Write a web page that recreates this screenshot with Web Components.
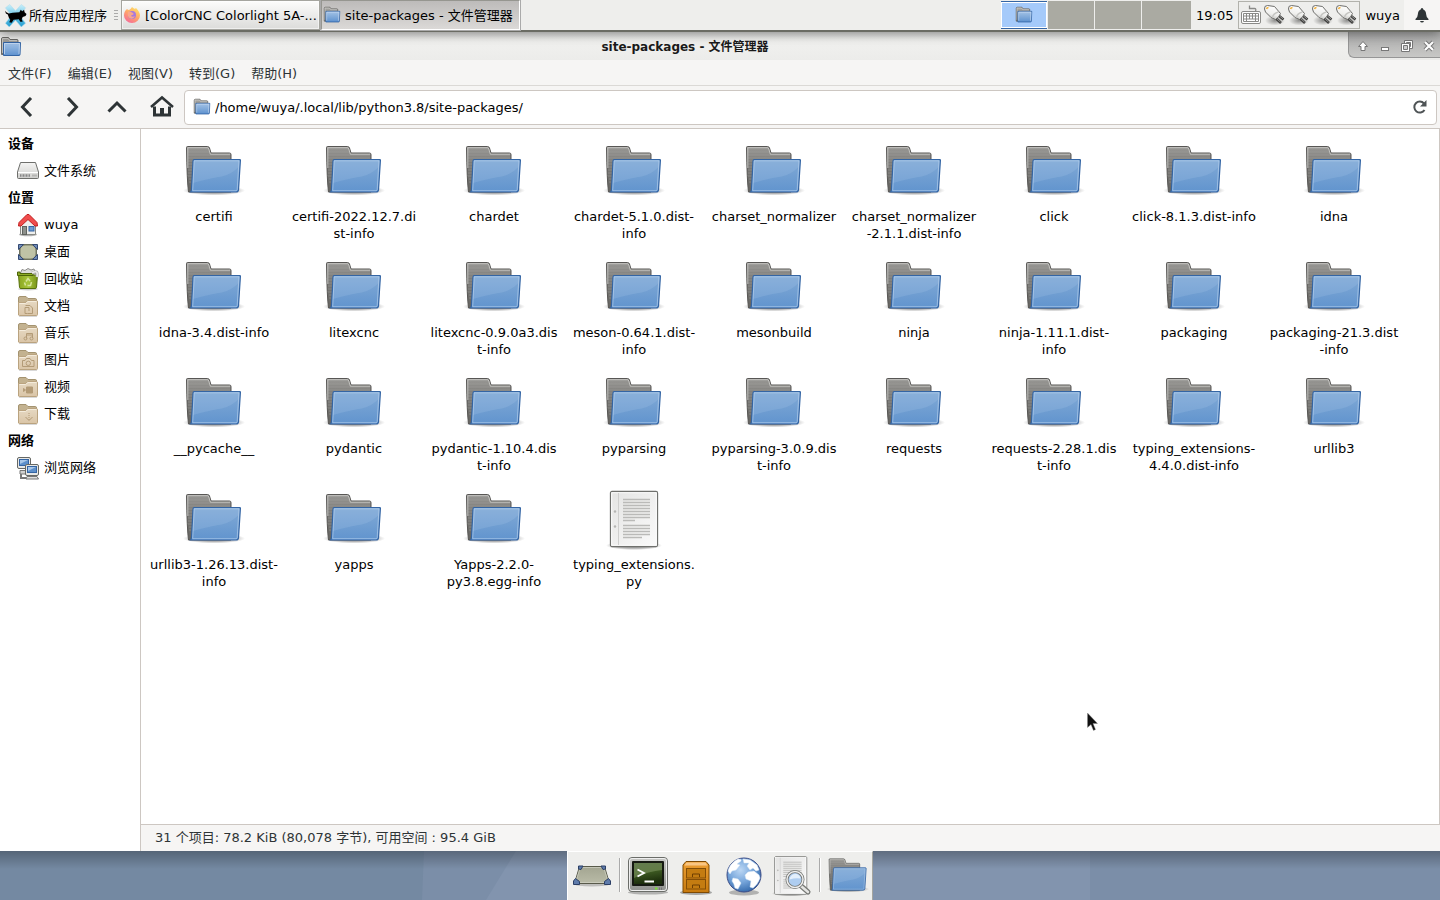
<!DOCTYPE html>
<html lang="zh-CN">
<head>
<meta charset="utf-8">
<title>site-packages - 文件管理器</title>
<style>
  html, body { margin: 0; height: 100%; }
  body { font: 13px/17px "DejaVu Sans", "Noto Sans CJK SC", sans-serif; color: #000; overflow: hidden; }
</style>
</head>
<body>
<xf-desktop>
  <xf-panel slot="panel"></xf-panel>
  <fm-window></fm-window>
  <xf-dock slot="dock"></xf-dock>
</xf-desktop>

<script>
const folderSmall = `<defs><linearGradient id="b" x2="0" y2="1"><stop stop-color="#aaa9a5"/><stop offset="1" stop-color="#73726f"/></linearGradient><linearGradient id="f" x2="0" y2="1"><stop stop-color="#a4c3e6"/><stop offset=".5" stop-color="#82abda"/><stop offset="1" stop-color="#5d91cf"/></linearGradient></defs>
  <path d="M1.5 18.5V3Q1.5 1.5 3 1.500H8.500L10 3.500H17Q18 3.500 18 4.500V18.500Z" fill="url(#b)" stroke="#6b6a67"/><path d="M2.500 17V2.500H8L9.500 4.500H17" fill="none" stroke="#d6d5d2" opacity=".7"/>
  <path d="M3.500 6.500H20.500L20 18.500Q20 19.500 19 19.500H3.500Z" fill="url(#f)" stroke="#3465a4"/><path d="M4.500 18V7.500H19.500L19 18" fill="none" stroke="#cfe0f4" opacity=".7"/>`;
const folderLarge = `<defs><linearGradient id="b" x2="0" y2="1"><stop stop-color="#9a9996"/><stop offset=".35" stop-color="#7c7b78"/><stop offset="1" stop-color="#656461"/></linearGradient><linearGradient id="f" x2="0" y2="1"><stop stop-color="#82aad6"/><stop offset="1" stop-color="#6194ce"/></linearGradient><radialGradient id="s"><stop stop-opacity=".5"/><stop offset=".6" stop-opacity=".3"/><stop offset="1" stop-opacity="0"/></radialGradient></defs>
  <ellipse cx="32" cy="52.500" rx="31" ry="5" fill="url(#s)"/>
  <path d="M6.500 54Q5 43 4.500 9.500Q4.500 8.500 5.500 8.500H25.500Q27 8.500 27.500 10L29 15H47.500Q49 15 49 16.500V54Z" fill="url(#b)" stroke="#585755"/>
  <path d="M6 14H27M6 17H48M6 20H48M6 23H11M6 26H11M6 29H11M6 32H10M6 35H10M6 38H10M7 41H10M7 44H9" stroke="#a6a5a2" opacity=".45"/>
  <path d="M5.800 30V9.700H25.500Q26.300 9.700 26.800 11L28.300 16.200H48" fill="none" stroke="#d0cfcc" opacity=".8"/>
  <path d="M12 21.500H57.500Q58.500 21.500 58.400 22.500L56.500 52Q56.300 54 54 54H8.500Q9.300 53 9.500 51L11 23Q11.200 21.500 12 21.500Z" fill="url(#f)" stroke="#3465a4" stroke-width="1.200"/>
  <path d="M12.200 23H57L56.500 29Q50 36 40 38.500Q28 40 11 45Z" fill="#a3c3e6" opacity=".25"/>
  <path d="M10.700 52.700L12.200 22.800H57L55.200 51.500Q55 52.700 54 52.700Z" fill="none" stroke="#c4daf2" opacity=".55"/>`;
const place = inner => `<defs><linearGradient id="f" x2="0" y2="1"><stop stop-color="#e6d9c3"/><stop offset="1" stop-color="#dac5a7"/></linearGradient></defs><g transform="translate(1 1)">
  <path d="M1.500 14V3Q1.500 1.500 3 1.500H9L11 3.500H18.500Q19.500 3.500 19.500 5V14Z" fill="#c3b290" stroke="#a49370"/>
  <path d="M1.500 20V7.500H8Q9 7.500 10 6.500Q10.500 5.500 12 5.500H19.500Q20.500 5.500 20.500 7V19.500Q20.500 20.500 19.500 20.500H2.500Q1.500 20.500 1.500 19.500Z" fill="url(#f)" stroke="#baa37f"/>
  <path d="M2.500 8.500H8.500L11 6.500H19.500" fill="none" stroke="#f4ecdc"/><path d="M2 21.500H20" stroke="#000" opacity=".15"/>
  <g fill="none" stroke="#b39b77">${inner}</g></g>`;
const doc = `<defs><linearGradient id="p" x2="1" y2="1"><stop stop-color="#e4e4e3"/><stop offset="1" stop-color="#fafafa"/></linearGradient><radialGradient id="s"><stop stop-opacity=".5"/><stop offset=".7" stop-opacity=".25"/><stop offset="1" stop-opacity="0"/></radialGradient></defs>
  <ellipse cx="32" cy="59.500" rx="28" ry="4.500" fill="url(#s)"/><rect x="8.500" y="5.500" width="47" height="55" rx="1.500" fill="url(#p)" stroke="#6f706d" stroke-width="1.300"/>
  <rect x="9.700" y="6.700" width="44.600" height="52.600" fill="none" stroke="#fff"/><path d="M16.500 7V59" stroke="#cfcfce"/><circle cx="13" cy="25.500" r="1.200" fill="#b5b5b3"/><circle cx="13" cy="40.500" r="1.200" fill="#b5b5b3"/>
  <path d="M21 13.500H48M21 16.500H48M21 19.500H48M21 22.500H48M21 25.500H48M21 28.500H48M21 31.500H48M21 34.500H33M21 39.500H48M21 42.500H48M21 45.500H48M21 48.500H48M21 51.500H40" stroke="#babab8" stroke-width="1.300"/>`;
const ICONS = {
  folder: [64, folderLarge],
  'folder-small': [22, folderSmall],
  doc: [64, doc],
  xfce: [24, `<defs><linearGradient id="x" x2="0" y2="1"><stop stop-color="#c8effb"/><stop offset=".5" stop-color="#6fc8e8"/><stop offset="1" stop-color="#1d9bd0"/></linearGradient></defs>
    <path d="M1.500 4L6 .500L12 7L18 .500L22.500 4L16.500 12L22.500 20L18 24L12 17L5.500 24L1.500 20L7.500 12Z" fill="url(#x)" stroke="#b4dcea" stroke-width=".6"/>
    <path d="M1 7L2.500 8.500L5 10L9 9L16 8.500L17.500 6L19 7.500L21 6L21.500 8.500L23.500 10.500L22.500 12.500L19.500 13.500L18.500 16L19.500 18.500L17 18.500L15.500 16L10 16.500L8 19.500L5.500 19L6.500 16.500L5 14L4 11L2 10Z"/>`],
  firefox: [18, `<defs><linearGradient id="x" x1=".8" x2=".2" y2="1"><stop stop-color="#ffe566"/><stop offset=".5" stop-color="#ffa46a"/><stop offset="1" stop-color="#f5679b"/></linearGradient></defs>
    <path d="M4 3Q5 4 6 4Q8 3 9 1Q10 2 12 3Q12.500 2 13 2Q17 6 17 9.500A8 7.500 0 0 1 1 9.500Q1 5 4 3Z" fill="url(#x)"/><circle cx="9" cy="9" r="4" fill="#a779dc"/><path d="M5 6Q7 5 9 6.500Q11 7 10.500 8.500Q8 9 8 10Q9.500 11.500 12 10Q10 14 6.500 12Q4 10 5 6Z" fill="#f9a78b"/>`],
  keyboard: [20, `<path d="M8.500 .500V3.500H13.500Q15.500 3.500 14.500 6" fill="none" stroke="#8a8a87" stroke-width="1.300"/><rect x=".5" y="6.500" width="19" height="12" rx="1.500" fill="#fff" stroke="#8a8a87"/>
    <path d="M2.500 8.500H17.500V16.500H2.500ZM2.500 11H17.500M2.500 14H17.500M5.500 8.500V16.500M8.500 8.500V14M11.500 8.500V14M14.500 8.500V16.500" fill="none" stroke="#8a8a87"/>`],
  plug: [22, `<defs><radialGradient id="s"><stop stop-opacity=".4"/><stop offset="1" stop-opacity="0"/></radialGradient><linearGradient id="g" x1=".6" x2=".3" y2="1"><stop stop-color="#fff"/><stop offset=".6" stop-color="#efefed"/><stop offset="1" stop-color="#b9b9b6"/></linearGradient></defs><ellipse cx="12" cy="16.500" rx="10" ry="5" fill="url(#s)"/>
    <path d="M12.500 14L18 19M15.500 11.500L20.500 15.500" stroke="#3f3f3d" stroke-width="2.600"/><path d="M13.500 14.500L17.500 18M16.500 12L20 14.800" stroke="#aaa" stroke-width=".8"/>
    <path d="M1.500 5Q1 1.500 4.500 1.500L11.500 2.500L17.500 9.500L15.500 13L12.500 15.500L8 13.500L2.500 8Z" fill="url(#g)" stroke="#6f6f6c"/><path d="M9.500 13.500Q10 9.500 15.500 8" fill="none" stroke="#c6c6c3" stroke-width="1.400"/><path d="M3.500 5Q4 3.500 5.500 3.500" fill="none" stroke="#f3b23a" stroke-width="1.600"/>`],
  bell: [16, `<path d="M8 1Q9.300 1 9.300 2.500Q12 3.500 12.200 7.500Q12.300 10.500 14.500 12V13H1.500V12Q3.700 10.500 3.800 7.500Q4 3.500 6.700 2.500Q6.700 1 8 1ZM6 14H10Q9.500 15.500 8 15.500Q6.500 15.500 6 14Z" fill="#2e3436"/>`],
  back: [20, `<path d="M14 1L5.500 10L14 19" fill="none" stroke="#2e3436" stroke-width="3"/>`],
  forward: [20, `<path d="M6 1L14.500 10L6 19" fill="none" stroke="#2e3436" stroke-width="3"/>`],
  up: [20, `<path d="M1.500 14.500L10 6L18.500 14.500" fill="none" stroke="#2e3436" stroke-width="3"/>`],
  home: [24, `<path d="M1 12L12 2.500L23 12" fill="none" stroke="#2e3436" stroke-width="2.500"/><path d="M4.500 11.500V20H19.500V11.500" fill="none" stroke="#2e3436" stroke-width="3"/><path d="M10 21V13H14V21Z" fill="#2e3436"/>`],
  reload: [16, `<path d="M12.500 11A5.500 5.500 0 1 1 12 4.500" fill="none" stroke="#4f5456" stroke-width="2"/><path d="M14.500 1V7.500H8Z" fill="#4f5456"/>`],
  shade: [12, `<path d="M6 1.500L10.500 6.500H8V10.500H4V6.500H1.500Z" fill="#fff" stroke="#777" stroke-width="1"/>`],
  min: [12, `<rect x="2.500" y="7.500" width="7" height="3" fill="#fff" stroke="#777"/>`],
  max: [12, `<path d="M3.500 .500H11.500V8.500H3.500Z" fill="#fff" stroke="#777"/><path d="M5.500 2.500H9.500V6.500H5.500Z" fill="#bbb" stroke="#777"/><path d="M.5 3.500H8.500V11.500H.5Z" fill="#fff" stroke="#777"/><path d="M2.500 5.500H6.500V9.500H2.500Z" fill="#ccc" stroke="#777"/>`],
  close: [12, `<path d="M2 2L10 10M10 2L2 10" stroke="#777" stroke-width="4"/><path d="M2 2L10 10M10 2L2 10" stroke="#fff" stroke-width="2.200"/>`],
  drive: [24, `<defs><linearGradient id="d" x2="0" y2="1"><stop stop-color="#f4f4f3"/><stop offset="1" stop-color="#cfcfcd"/></linearGradient></defs><path d="M4.500 3.500H19.500L22.500 13V18.500Q22.500 19.500 21.500 19.500H2.500Q1.500 19.500 1.500 18.500V13Z" fill="url(#d)" stroke="#6e6f6c"/><path d="M2 13.500H22" stroke="#fff"/><path d="M4 16.500H14" stroke="#888" stroke-width="2.500" stroke-dasharray="1 .5"/><path d="M16 16.500H21" stroke="#b5b5b3" stroke-width="2"/>`],
  house: [24, `<ellipse cx="12" cy="21.500" rx="9" ry="1.800" opacity=".3"/><path d="M4.500 11L12 4L19.500 11V21.500H4.500Z" fill="#efefed" stroke="#888a85"/><path d="M2.500 13L3 9.500L11 1.500H13L21 9.500L21.500 13L19 13L12 6.500L5 13Z" fill="#f04d4d" stroke="#c11f1f"/><rect x="6.500" y="13.500" width="4" height="8" fill="#8d908b" stroke="#60635f"/><rect x="13" y="13.500" width="5" height="4.500" fill="#6b9bd3" stroke="#3465a4"/>`],
  desk: [24, `<rect x="3.500" y="4.500" width="17" height="15" fill="#989b82" stroke="#686b58"/><rect x="4" y="5" width="16" height="14" rx="5" fill="#c0c3a6" stroke="#777a64"/><path d="M2.500 4.500H7.500L2.500 9.500ZM16.500 4.500H21.500V9.500ZM2.500 14.500V19.500H7.500ZM21.500 14.500V19.500H16.500Z" fill="#6f8bb8" stroke="#354a72"/>`],
  trash: [24, `<defs><linearGradient id="t" x2="1"><stop stop-color="#8aa51f"/><stop offset=".5" stop-color="#a6c43a"/><stop offset="1" stop-color="#779318"/></linearGradient></defs><ellipse cx="12" cy="22" rx="10" ry="1.500" opacity=".2"/><path d="M2.500 8L3.500 20.500Q3.700 21.500 5 21.500H19Q20.300 21.500 20.500 20.500L21.500 8Z" fill="url(#t)" stroke="#56700a"/><path d="M4 7L6 2.500L9 3.500L12 1.500L15 3L18 2L20 7Z" fill="#dcdcda" stroke="#8c8c8a"/><path d="M1.500 8.500V5H4V6.500H17V8.500Z" fill="#8cab26" stroke="#4d6409"/><path d="M16 6Q22.500 2 21 10" fill="none" stroke="#b5b5b2" stroke-width="3"/><path d="M16 6Q22.500 2 21 10" fill="none" stroke="#ececea" stroke-width="1.500"/><path d="M10 14.500L12 11.500L14 14M15.500 15L14.500 18.500H11.500M8.500 15.500L9.500 18.500" fill="none" stroke="#d6e59b" stroke-width="1.500"/>`],
  documents: [24, place(`<path d="M8.500 10.500H13L15.500 13V18.500H10.500M10.500 18.500H8V12.500H12V16"/>`)],
  music: [24, place(`<path d="M9.500 16.500V11.500H15.500V16M9.500 13H15"/><circle cx="8.500" cy="16.500" r="1.500"/><circle cx="14.500" cy="16.500" r="1.500"/>`)],
  pictures: [24, place(`<path d="M5.500 11.500H8L9.500 9.500H13L14.500 11.500H17V17.500H5.500Z"/><circle cx="11.300" cy="14.300" r="2.200"/>`)],
  videos: [24, place(`<path d="M9.500 11H15.500V17H9.500Z" fill="#b39b77"/><path d="M6.500 12.500V15.500L8.500 14Z" fill="#b39b77"/>`)],
  downloads: [24, place(`<path d="M12 10V17" stroke-dasharray="1 1"/><path d="M8.500 14L12 17.500L15.500 14"/>`)],
  network: [24, `<rect x="1.500" y="1.500" width="13" height="11" rx="1.500" fill="#e8e8e6" stroke="#666864"/><rect x="3.500" y="3.500" width="9" height="6" fill="#5d8fca" stroke="#3465a4"/><path d="M4 8L12 4V4H4Z" fill="#a9c7e8"/><path d="M4 14.500H10V18H4Z" fill="#d0d0ce" stroke="#777"/><path d="M5 18V22H10" fill="none" stroke="#777" stroke-width="2"/>
    <rect x="9.500" y="8.500" width="13" height="11" rx="1.500" fill="#e8e8e6" stroke="#666864"/><rect x="11.500" y="10.500" width="9" height="6" fill="#5d8fca" stroke="#3465a4"/><path d="M12 15L20 11H12Z" fill="#a9c7e8"/><path d="M11 20.500H21L22.500 23H10Z" fill="#dededc" stroke="#777"/>`],
  showdesk: [40, `<defs><linearGradient id="d" x2="0" y2="1"><stop stop-color="#a3a591"/><stop offset="1" stop-color="#b9bba7"/></linearGradient></defs><ellipse cx="20" cy="29" rx="18" ry="2.500" opacity=".2"/><path d="M7.500 11.500H32.500L37.500 28.500H2.500Z" fill="url(#d)" stroke="#585a4a"/><path d="M8.300 12.500H31.700L36.500 27.500H3.500Z" fill="none" stroke="#d2d3c6" opacity=".7"/>
    <path d="M6.500 14V11H11L9 14.500ZM33.500 14V11H29L31 14.500ZM1.500 29.500V26L3.500 23.500L7.500 26.500V29.500ZM38.500 29.500V26L36.500 23.500L32.500 26.500V29.500Z" fill="#5e7bab" stroke="#2b3f66"/>`],
  terminal: [48, `<defs><linearGradient id="a" x2="0" y2="1"><stop stop-color="#c8c9c6"/><stop offset="1" stop-color="#90928e"/></linearGradient><linearGradient id="t" x2=".2" y2="1"><stop stop-color="#3f5a2f"/><stop offset=".5" stop-color="#3d5a22"/><stop offset="1" stop-color="#1c2e0c"/></linearGradient></defs>
    <ellipse cx="24" cy="41.500" rx="20" ry="2" opacity=".25"/><rect x="4.500" y="6.500" width="39" height="34" rx="3.500" fill="url(#a)" stroke="#6b6d69"/><rect x="5.500" y="7.500" width="37" height="32" rx="2.500" fill="none" stroke="#eee"/><rect x="8" y="10" width="32" height="25" rx="1" fill="#161a12"/><rect x="10" y="12" width="28" height="21" fill="url(#t)"/><path d="M10 12H38V19Q25 20 10 27Z" fill="#9cb07e" opacity=".4"/><path d="M13.500 18.500L20 22L13.500 25.500M20.500 30.500H30" fill="none" stroke="#fff" stroke-width="1.800"/><path d="M31 37.500H33.500" stroke="#7be035" stroke-width="2"/><path d="M35.500 36.500V39M37.500 36.500V39" stroke="#777"/>`],
  cabinet: [48, `<defs><linearGradient id="c" x2="0" y2="1"><stop stop-color="#eea035"/><stop offset="1" stop-color="#c77a0e"/></linearGradient></defs><ellipse cx="24" cy="41.500" rx="16" ry="2.500" opacity=".3"/><path d="M14 10.500H34L37 14V41.500H11V14Z" fill="url(#c)" stroke="#7f4a03"/><path d="M14.500 11.500H33.500L35.500 14.500H12.500Z" fill="#f9c684"/><rect x="14.500" y="17.500" width="19" height="9.500" fill="#c47c11" stroke="#844e06"/><rect x="14.500" y="28.500" width="19" height="9.500" fill="#c47c11" stroke="#844e06"/><path d="M20.500 26V23H27.500V26M20.500 37V34H27.500V37" fill="none" stroke="#6f3f02"/>`],
  globe: [48, `<defs><radialGradient id="g" cx=".4" cy=".35" r=".65"><stop stop-color="#bcd7f4"/><stop offset=".55" stop-color="#77a6db"/><stop offset="1" stop-color="#3a6fb0"/></radialGradient></defs><ellipse cx="24" cy="41.500" rx="15" ry="3" opacity=".25"/><circle cx="24" cy="24" r="17" fill="url(#g)" stroke="#3c4c86"/>
    <path d="M8 20Q10 12 18 8Q22 8 21 10L17 13L20 14L16 19L12 20L10 23ZM13 27L18 28L21 32L18 38L15 37Q14 32 12 30ZM23 8L30 9L37 14L39 19L36 20L33 17L30 19L27 15L29 12L24 12ZM28 21L34 20L39 24L40 27Q38 33 33 37L30 36L31 30L26 28L25 24Z" fill="#fff" stroke="#dbe9f7" stroke-width=".5"/>`],
  search: [48, `<g transform="translate(1 2) scale(.68)">${doc}</g><path d="M32 34L40 41" stroke="#777975" stroke-width="5" stroke-linecap="round"/><path d="M33 35L40 41" stroke="#e4e4e2" stroke-width="2.500" stroke-linecap="round"/><circle cx="27" cy="28.500" r="8" fill="#aecdf0" stroke="#747672" stroke-width="3"/><circle cx="27" cy="28.500" r="8" fill="none" stroke="#eee" stroke-width="1.500"/><path d="M21.500 28.500Q22.500 22.500 28.500 23Q32.500 24.500 32.500 27.500Q27.500 26.500 21.500 28.500Z" fill="#e3effb"/>`],
  cursor: [20, `<path d="M7.500 2V16.500L11 13.500L13.500 19.500L16 18.500L13.500 13H18Z" fill="#111" stroke="#fff" stroke-width="3" stroke-linejoin="round" opacity=".9"/><path d="M7.500 2V16.500L11 13.500L13.500 19.500L15.500 18.500L13 12.500H17.500Z" fill="#111" stroke="#888" stroke-width=".4"/>`]
};

class UiIcon extends HTMLElement {
  connectedCallback() {
    if (this.shadowRoot) return;
    const [box, body] = ICONS[this.getAttribute('name')];
    const size = this.getAttribute('size') || box;
    this.attachShadow({ mode: 'open' }).innerHTML =
      `<style>:host{display:block;flex:none;width:${size}px;height:${size}px}svg{display:block}</style>
       <svg width="${size}" height="${size}" viewBox="0 0 ${box} ${box}" aria-hidden="true">${body}</svg>`;
  }
}

const define = (name, html) => customElements.define(name, class extends HTMLElement {
  connectedCallback() {
    if (this.shadowRoot) return;
    const t = document.createElement('template');
    t.innerHTML = html;
    this.attachShadow({ mode: 'open' }).append(t.content.cloneNode(true));
  }
});

const BUTTON = `button{font:inherit;color:inherit;border:0;background:none;padding:0;margin:0;display:flex;align-items:center;white-space:nowrap}`;

customElements.define('ui-icon', UiIcon);

define('xf-desktop', `<style>
  :host{display:flex;flex-direction:column;height:100vh;position:relative;background:#7489a2}
  .main{flex:1;min-height:0;display:flex;position:relative}
  ::slotted(fm-window){flex:1;min-width:0}
  .foot{height:49px;position:relative;display:flex;justify-content:center;overflow:hidden}
  .wall{position:absolute;inset:0;width:100%;height:100%}
  .shade{position:absolute;inset:0 0 auto;height:18px;background:linear-gradient(#0004,#0000)}
  ui-icon{position:absolute;left:1080px;top:711px}
</style>
<slot name="panel"></slot><div class="main"><slot></slot></div>
<div class="foot"><svg class="wall" viewBox="0 0 1440 49" preserveAspectRatio="none" aria-hidden="true"><path d="M424 0H1440V49H422Z" fill="#7b8ea8"/><path d="M516 0H1090V49H486Z" fill="#8294ae"/></svg><div class="shade"></div><slot name="dock"></slot></div>
<ui-icon name="cursor"></ui-icon>`);

define('task-button', `<style>
  :host{display:block;width:199px}
  ${BUTTON}
  button{box-sizing:border-box;width:100%;height:30px;gap:4px;padding:0 1px;border:1px solid #a5a59f;background:linear-gradient(#fcfcfb,#dcdcda);box-shadow:inset 0 0 0 1px #fff8}
  :host([active]) button{background:linear-gradient(#bdbbba,#dbd9d7);border-color:#969690 #fff #fff #969690;box-shadow:0 0 0 1px #aaa}
</style><button type="button"><slot name="icon"></slot><slot></slot></button>`);

define('xf-panel', `<style>
  :host{display:flex;align-items:center;height:30px;background:#eeeeec;border-bottom:2px solid #6b6c64;position:relative;z-index:2;box-shadow:0 2px 12px #0006}
  ${BUTTON}
  .apps{gap:2px;padding-left:4px;width:114px;box-sizing:border-box}
  .handle{width:4px;height:10px;margin-right:3px;background:repeating-linear-gradient(#aaa 0 1px,#eeeeec 1px 3px)}
  task-button+task-button{margin-left:1px}
  .gap{flex:1}
  .pager{display:grid;grid-template-columns:46px 46px 46px 49px;gap:1px;height:28px;margin-right:5px}
  .pager button{background:#aaaaa2;justify-content:center}
  .pager .on{background:#a5cafa;border:1px solid #3465a4;border-width:1px 0;box-shadow:inset 0 0 0 1px #fff}
  .tray{display:flex;align-items:center;box-sizing:border-box;width:122px;height:28px;border:1px solid #b2b2ac;padding:0 2px;gap:2px;margin:0 5px}
  .bell{height:30px;width:36px;justify-content:center;background:#f6f5f4;margin-left:4px}
</style>
<button class="apps" type="button"><ui-icon name="xfce" size="23"></ui-icon>所有应用程序</button><i class="handle"></i>
<task-button><ui-icon slot="icon" name="firefox" size="18"></ui-icon>[ColorCNC Colorlight 5A-...</task-button>
<task-button active><ui-icon slot="icon" name="folder-small" size="18"></ui-icon>site-packages - 文件管理器</task-button>
<span class="gap"></span>
<div class="pager"><button class="on" aria-label="工作区 1"><ui-icon name="folder-small" size="18"></ui-icon></button><button aria-label="工作区 2"></button><button aria-label="工作区 3"></button><button aria-label="工作区 4"></button></div>
<time>19:05</time>
<div class="tray"><ui-icon name="keyboard" size="20"></ui-icon><ui-icon name="plug"></ui-icon><ui-icon name="plug"></ui-icon><ui-icon name="plug"></ui-icon><ui-icon name="plug"></ui-icon></div>
<button type="button">wuya</button><button class="bell" type="button" aria-label="通知"><ui-icon name="bell"></ui-icon></button>`);

define('fm-title', `<style>
  :host{display:flex;height:28px;background:linear-gradient(#e2e2e0,#f1f1ef 8px,#ececea)}
  .ic{padding:4px 0 0 0}
  h1{flex:1;margin:0;font:bold 12px/30px "DejaVu Sans","Noto Sans CJK SC",sans-serif;text-align:center;color:#1a1a1a}
  ${BUTTON}
  .ctl{display:flex;align-items:center;box-sizing:border-box;width:92px;height:26px;padding:2px 0 0 3px;background:linear-gradient(#aaa,#c8c8c6);border:1px solid #969696;border-width:0 0 1px 1px;border-radius:0 0 0 6px}
  .ctl button{width:22px;height:24px;justify-content:center}
</style><div class="ic"><ui-icon name="folder-small" size="22"></ui-icon></div><h1><slot></slot></h1>
<div class="ctl"><button aria-label="卷起"><ui-icon name="shade"></ui-icon></button><button aria-label="最小化"><ui-icon name="min"></ui-icon></button><button aria-label="还原"><ui-icon name="max"></ui-icon></button><button aria-label="关闭"><ui-icon name="close"></ui-icon></button></div>`);

define('fm-menubar', `<style>
  :host{display:flex;height:25px;background:#f6f5f4;border-bottom:1px solid #dbd9d6;color:#2e3436}
  ${BUTTON}
  button{padding:2px 8px 0}
</style><button>文件(F)</button><button>编辑(E)</button><button>视图(V)</button><button>转到(G)</button><button>帮助(H)</button>`);

define('fm-toolbar', `<style>
  :host{display:flex;align-items:center;height:42px;background:#f6f5f4;border-bottom:1px solid #cdc7c2;padding:0 3px 0 4px}
  ${BUTTON}
  .nav{width:45px;height:34px;justify-content:center}
  form{flex:1;display:flex;align-items:center;box-sizing:border-box;height:35px;padding:0 8px;gap:4px;background:#fff;border:1px solid #cdc7c2;border-radius:4px}
  input{flex:1;min-width:0;border:0;padding:0;outline:0;background:none;font:inherit;color:#000}
</style>
<button class="nav" aria-label="后退"><ui-icon name="back"></ui-icon></button><button class="nav" aria-label="前进"><ui-icon name="forward"></ui-icon></button><button class="nav" aria-label="上级"><ui-icon name="up"></ui-icon></button><button class="nav" aria-label="主目录"><ui-icon name="home"></ui-icon></button>
<form><ui-icon name="folder-small" size="18"></ui-icon><input aria-label="位置" value="/home/wuya/.local/lib/python3.8/site-packages/"><button type="button" aria-label="重新载入"><ui-icon name="reload"></ui-icon></button></form>`);

define('side-item', `<style>
  :host{display:block}
  a{display:flex;align-items:center;gap:4px;height:27px;padding-left:16px;color:#000;text-decoration:none}
</style><a href="#"><slot name="icon"></slot><slot></slot></a>`);

const side = [['', '设备'], ['drive', '文件系统'], ['', '位置'], ['house', 'wuya'], ['desk', '桌面'], ['trash', '回收站'], ['documents', '文档'], ['music', '音乐'], ['pictures', '图片'], ['videos', '视频'], ['downloads', '下载'], ['', '网络'], ['network', '浏览网络']];
define('fm-sidebar', `<style>
  :host{display:block;background:#fff;border-right:1px solid #cdc7c2;padding-top:1px}
  h2{margin:0;padding-left:8px;font-size:13px;line-height:27px;font-weight:bold}
</style>` + side.map(([i, t]) => i ? `<side-item><ui-icon slot="icon" name="${i}" size="24"></ui-icon>${t}</side-item>` : `<h2>${t}</h2>`).join(''));

define('file-item', `<style>
  :host{display:flex;flex-direction:column;align-items:center;gap:6px;box-sizing:border-box;height:116px;padding-top:4px;text-align:center;white-space:nowrap}
</style><slot name="icon"></slot><span><slot></slot></span>`);

const files = ['certifi', 'certifi-2022.12.7.di|st-info', 'chardet', 'chardet-5.1.0.dist-|info', 'charset_normalizer', 'charset_normalizer|-2.1.1.dist-info', 'click', 'click-8.1.3.dist-info', 'idna',
  'idna-3.4.dist-info', 'litexcnc', 'litexcnc-0.9.0a3.dis|t-info', 'meson-0.64.1.dist-|info', 'mesonbuild', 'ninja', 'ninja-1.11.1.dist-|info', 'packaging', 'packaging-21.3.dist|-info',
  '__pycache__', 'pydantic', 'pydantic-1.10.4.dis|t-info', 'pyparsing', 'pyparsing-3.0.9.dis|t-info', 'requests', 'requests-2.28.1.dis|t-info', 'typing_extensions-|4.4.0.dist-info', 'urllib3',
  'urllib3-1.26.13.dist-|info', 'yapps', 'Yapps-2.2.0-|py3.8.egg-info', 'typing_extensions.|py'];
define('file-grid', `<style>
  :host{display:grid;grid-template-columns:repeat(auto-fill,140px);grid-auto-rows:116px;align-content:start;padding:5px 0 0 3px;background:#fff;border-right:1px solid #cdc7c2;overflow:hidden}
</style>` + files.map(f => `<file-item><ui-icon slot="icon" name="${f.endsWith('|py') ? 'doc' : 'folder'}" size="64"></ui-icon>${f.replace('|', '<br>')}</file-item>`).join(''));

define('fm-window', `<style>
  :host{display:flex;flex-direction:column;background:#f6f5f4}
  .body{flex:1;min-height:0;display:grid;grid-template-columns:141px 1fr}
  .view{display:flex;flex-direction:column;min-width:0}
  file-grid{flex:1;min-height:0}
  footer{height:26px;line-height:26px;padding-left:14px;border-top:1px solid #cdc7c2;color:#2e3436}
</style>
<fm-title>site-packages - 文件管理器</fm-title><fm-menubar></fm-menubar><fm-toolbar></fm-toolbar>
<div class="body"><fm-sidebar></fm-sidebar><div class="view"><file-grid></file-grid><footer>31 个项目: 78.2 KiB (80,078 字节), 可用空间 : 95.4 GiB</footer></div></div>`);

define('xf-dock', `<style>
  :host{display:flex;align-items:center;position:relative;box-sizing:border-box;width:306px;height:49px;background:#eeeeec;border:1px solid #fff;border-right-color:#a5a59f;border-bottom:0;padding-bottom:2px}
  ${BUTTON}
  button{width:48px;justify-content:center}
  i{width:1px;height:34px;margin:0 3px;background:#aaa;border-right:1px solid #fff}
</style>
<button aria-label="显示桌面"><ui-icon name="showdesk"></ui-icon></button><i></i><button aria-label="终端"><ui-icon name="terminal"></ui-icon></button><button aria-label="文件"><ui-icon name="cabinet"></ui-icon></button><button aria-label="浏览器"><ui-icon name="globe"></ui-icon></button><button aria-label="查找"><ui-icon name="search"></ui-icon></button><i></i><button aria-label="主目录"><ui-icon name="folder" size="44"></ui-icon></button>`);
</script>
</body>
</html>
